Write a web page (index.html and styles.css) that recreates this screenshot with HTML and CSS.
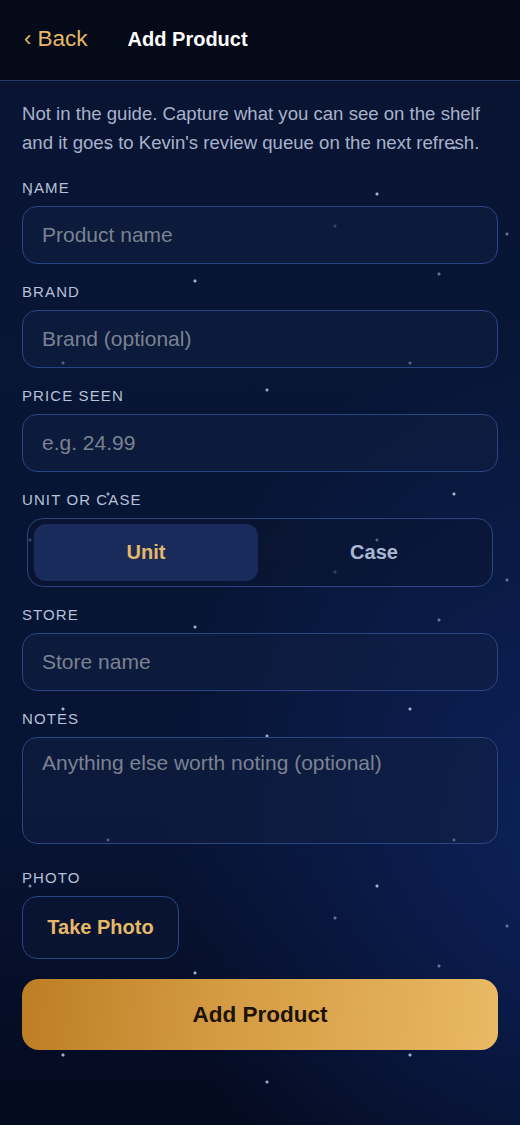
FILE: index.html
```html
<!DOCTYPE html>
<html lang="en">
<head>
  <meta charset="UTF-8" />
  <meta name="viewport" content="width=device-width, initial-scale=1" />
  <title>Add Product</title>
  <link rel="stylesheet" href="styles.css">
</head>
<body>
  <header class="topbar">
    <a class="back-link" href="#"><span class="chev">‹</span> Back</a>
    <h1>Add Product</h1>
  </header>

  <main class="form-page">
    <p class="intro">Not in the guide. Capture what you can see on the shelf and it goes to Kevin's review queue on the next refresh.</p>

    <div class="field">
      <label for="name">Name</label>
      <input id="name" type="text" placeholder="Product name">
    </div>

    <div class="field">
      <label for="brand">Brand</label>
      <input id="brand" type="text" placeholder="Brand (optional)">
    </div>

    <div class="field">
      <label for="price">Price seen</label>
      <input id="price" type="text" placeholder="e.g. 24.99">
    </div>

    <div class="field">
      <label>Unit or case</label>
      <div class="segment">
        <button class="seg-btn active">Unit</button>
        <button class="seg-btn">Case</button>
      </div>
    </div>

    <div class="field">
      <label for="store">Store</label>
      <input id="store" type="text" placeholder="Store name">
    </div>

    <div class="field notes-field">
      <label for="notes">Notes</label>
      <textarea id="notes" placeholder="Anything else worth noting (optional)"></textarea>
    </div>

    <div class="field photo-field">
      <label>Photo</label>
      <button class="photo-btn">Take Photo</button>
    </div>

    <button class="submit-btn">Add Product</button>
  </main>
</body>
</html>
```

FILE: styles.css
```css
* {
  box-sizing: border-box;
}

body {
  font-family: "Liberation Sans", Arial, sans-serif;
  margin: 0;
  min-height: 1125px;
  color: #fff;
  background-color: #07122e;
  background-image:
    radial-gradient(circle at 63px 17px, rgba(190, 205, 235, 0.85) 1px, transparent 2px),
    radial-gradient(circle at 410px 17px, rgba(190, 205, 235, 0.85) 1px, transparent 2px),
    radial-gradient(circle at 267px 44px, rgba(190, 205, 235, 0.8) 1px, transparent 2px),
    radial-gradient(circle at 108px 148px, rgba(190, 205, 235, 0.8) 1px, transparent 2px),
    radial-gradient(circle at 454px 148px, rgba(190, 205, 235, 0.85) 1px, transparent 2px),
    radial-gradient(circle at 30px 194px, rgba(190, 205, 235, 0.6) 1px, transparent 2px),
    radial-gradient(circle at 377px 194px, rgba(190, 205, 235, 0.85) 1px, transparent 2px),
    radial-gradient(circle at 335px 226px, rgba(190, 205, 235, 0.5) 1px, transparent 2px),
    radial-gradient(circle at 507px 234px, rgba(190, 205, 235, 0.5) 1px, transparent 2px),
    radial-gradient(circle at 439px 274px, rgba(190, 205, 235, 0.5) 1px, transparent 2px),
    radial-gradient(circle at 195px 281px, rgba(190, 205, 235, 0.85) 1px, transparent 2px),
    radial-gradient(ellipse 400px 520px at 108% 74%, #0d2159 0%, rgba(13, 33, 89, 0) 100%),
    linear-gradient(180deg, #0a1433 0%, #071535 45%, #071333 75%, #040a1e 100%);
  background-size:
    520px 346px, 520px 346px, 520px 346px, 520px 346px, 520px 346px, 520px 346px,
    520px 346px, 520px 346px, 520px 346px, 520px 346px, 520px 346px,
    100% 100%, 100% 100%;
  background-repeat:
    repeat, repeat, repeat, repeat, repeat, repeat,
    repeat, repeat, repeat, repeat, repeat,
    no-repeat, no-repeat;
}

.topbar {
  display: flex;
  align-items: center;
  gap: 40px;
  height: 81px;
  padding: 0 24px 2px;
  background: #050a18;
  border-bottom: 1px solid #25396a;
}

.back-link {
  color: #e6b968;
  font-size: 22.5px;
  text-decoration: none;
}

.back-link .chev {
  font-size: 22px;
}

.topbar h1 {
  margin: 0;
  font-size: 20px;
  font-weight: 700;
  color: #fff;
}

.form-page {
  padding: 18px 22px 40px;
}

.intro {
  margin: 0 0 22px;
  font-size: 18.6px;
  line-height: 29px;
  color: #a7b2ca;
}

.field {
  margin-bottom: 19px;
}

.field label {
  display: block;
  height: 18px;
  margin-bottom: 9px;
  font-size: 15px;
  line-height: 18px;
  letter-spacing: 1.1px;
  text-transform: uppercase;
  color: #b7c1d7;
}

.field input,
.field textarea {
  display: block;
  width: 100%;
  height: 58px;
  padding: 0 19px;
  border: 1px solid #2a4581;
  border-radius: 15px;
  background: rgba(17, 31, 66, 0.55);
  font-family: inherit;
  font-size: 21px;
  color: #e6ebf5;
  outline: none;
}

.field textarea {
  height: 107px;
  padding: 13px 19px;
  resize: none;
}

.field input::placeholder,
.field textarea::placeholder {
  color: #7b8291;
}

.notes-field {
  margin-bottom: 25px;
}

.segment {
  display: grid;
  grid-template-columns: 1fr 1fr;
  gap: 4px;
  height: 69px;
  margin: 0 5px;
  padding: 5px 6px;
  border: 1px solid #2a4581;
  border-radius: 16px;
  background: rgba(10, 20, 46, 0.5);
}

.seg-btn {
  border: none;
  border-radius: 12px;
  background: transparent;
  font-family: inherit;
  font-size: 20px;
  font-weight: 700;
  color: #a9b6d4;
  cursor: pointer;
}

.seg-btn.active {
  background: #182b5a;
  color: #e6b968;
}

.photo-field {
  margin-bottom: 20px;
}

.photo-btn {
  width: 157px;
  height: 63px;
  border: 1px solid #2a4581;
  border-radius: 15px;
  background: rgba(12, 24, 54, 0.6);
  font-family: inherit;
  font-size: 20px;
  font-weight: 700;
  color: #e6b968;
  cursor: pointer;
}

.submit-btn {
  display: block;
  width: 100%;
  height: 71px;
  border: none;
  border-radius: 17px;
  background: linear-gradient(95deg, #bd7d24 0%, #d39a42 40%, #e9b963 100%);
  font-family: inherit;
  font-size: 22.5px;
  font-weight: 700;
  color: #1c1207;
  cursor: pointer;
}
```
